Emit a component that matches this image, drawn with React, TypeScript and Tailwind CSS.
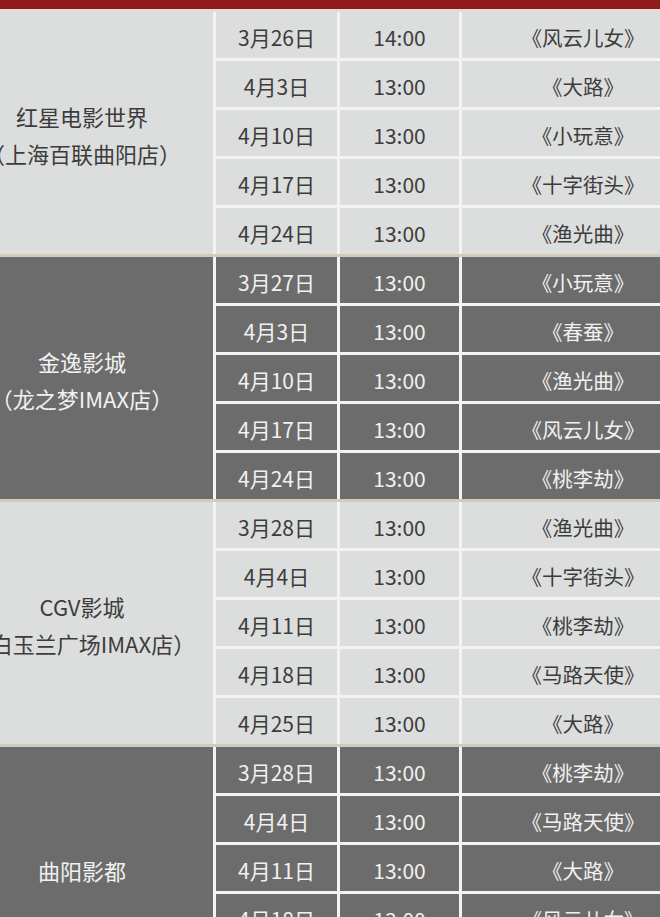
import React from "react";

type Section = {
  name: string[];
  dark: boolean;
  rows: [string, string, string][];
};

const sections: Section[] = [
  {
    name: ["红星电影世界", "（上海百联曲阳店）"],
    dark: false,
    rows: [
      ["3月26日", "14:00", "《风云儿女》"],
      ["4月3日", "13:00", "《大路》"],
      ["4月10日", "13:00", "《小玩意》"],
      ["4月17日", "13:00", "《十字街头》"],
      ["4月24日", "13:00", "《渔光曲》"],
    ],
  },
  {
    name: ["金逸影城", "（龙之梦IMAX店）"],
    dark: true,
    rows: [
      ["3月27日", "13:00", "《小玩意》"],
      ["4月3日", "13:00", "《春蚕》"],
      ["4月10日", "13:00", "《渔光曲》"],
      ["4月17日", "13:00", "《风云儿女》"],
      ["4月24日", "13:00", "《桃李劫》"],
    ],
  },
  {
    name: ["CGV影城", "（白玉兰广场IMAX店）"],
    dark: false,
    rows: [
      ["3月28日", "13:00", "《渔光曲》"],
      ["4月4日", "13:00", "《十字街头》"],
      ["4月11日", "13:00", "《桃李劫》"],
      ["4月18日", "13:00", "《马路天使》"],
      ["4月25日", "13:00", "《大路》"],
    ],
  },
  {
    name: ["曲阳影都"],
    dark: true,
    rows: [
      ["3月28日", "13:00", "《桃李劫》"],
      ["4月4日", "13:00", "《马路天使》"],
      ["4月11日", "13:00", "《大路》"],
      ["4月18日", "13:00", "《风云儿女》"],
      ["4月25日", "13:00", "《小玩意》"],
    ],
  },
];

function ScheduleSection({ section, first }: { section: Section; first: boolean }) {
  const bg = section.dark ? "bg-[#6c6c6c]" : "bg-[#dcdedd]";
  const text = section.dark ? "text-[#f1f1f1]" : "text-[#3c3c3c]";

  return (
    <div
      className={`flex border-t-[3px] ${first ? "border-[#e4ddd3]" : "border-[#d3cabc]"} ${text}`}
    >
      {/* cinema name */}
      <div
        className={`w-[262px] shrink-0 flex flex-col items-center justify-center pt-[4px] text-[22px] leading-[37px] ${bg}`}
      >
        {section.name.map((line) => (
          <div key={line} className="whitespace-nowrap">
            {line}
          </div>
        ))}
      </div>

      {/* date / time / film grid */}
      <div className="flex flex-col gap-[3px] pl-[3px] bg-[#f3f3f3]">
        {section.rows.map(([date, time, film]) => (
          <div key={date + film} className="flex gap-[3px] h-[46px]">
            <div className={`w-[121px] flex items-center justify-center pt-[5px] text-[21px] ${bg}`}>
              {date}
            </div>
            <div className={`w-[119px] flex items-center justify-center pt-[5px] text-[21px] ${bg}`}>
              {time}
            </div>
            <div className={`w-[242px] flex items-center justify-center pt-[5px] text-[20.5px] ${bg}`}>
              {film}
            </div>
          </div>
        ))}
      </div>
    </div>
  );
}

export default function App() {
  return (
    <div className="w-[660px] h-[917px] overflow-hidden bg-white font-['Noto_Sans_CJK_SC',sans-serif]">
      <div className="h-[9px] bg-[#8f1b1e]" />
      <div className="ml-[-49px] w-[753px]">
        {sections.map((s, i) => (
          <ScheduleSection key={s.name[0]} section={s} first={i === 0} />
        ))}
      </div>
    </div>
  );
}
